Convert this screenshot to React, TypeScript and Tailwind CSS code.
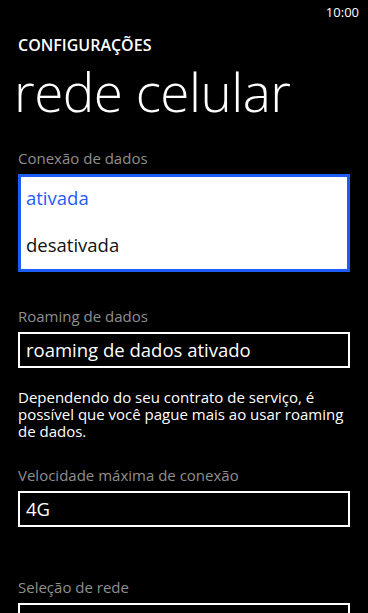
const FONT = { fontFamily: '"Open Sans", "Noto Sans", sans-serif' };

function Label({ children }: { children: string }) {
  return <p className="text-[15px] leading-5 text-[#8f8f8f]">{children}</p>;
}

function ValueBox({ value }: { value?: string }) {
  return (
    <div className="mt-[6px] flex h-9 items-center border-2 border-white px-[6px] text-[18.5px] text-white">
      {value}
    </div>
  );
}

export default function App() {
  return (
    <div className="h-[613px] w-[368px] overflow-hidden bg-black text-white" style={FONT}>
      <div className="flex h-6 items-start justify-end pr-[9px] pt-[3px] text-[13px]">10:00</div>

      <div className="px-[18px]">
        <h2 className="mt-[13px] text-[16px] font-semibold leading-4">CONFIGURAÇÕES</h2>
        <h1 className="-ml-1 mt-[3px] text-[53px] font-light leading-[72px] tracking-[-0.5px]">rede celular</h1>

        <section className="mt-[20px]">
          <Label>Conexão de dados</Label>
          <div className="mt-[6px] flex h-[98px] flex-col gap-[23px] border-[3px] border-[#1e5cf7] bg-white px-[5px] pt-[9px] text-[18.5px] leading-6">
            <span className="text-[#1e5cf7]">ativada</span>
            <span className="text-[#111]">desativada</span>
          </div>
        </section>

        <section className="mt-[34px]">
          <Label>Roaming de dados</Label>
          <ValueBox value="roaming de dados ativado" />
          <p className="mt-[21px] text-[15px] leading-[17px] text-white">
            Dependendo do seu contrato de serviço, é possível que você pague mais ao usar roaming de dados.
          </p>
        </section>

        <section className="mt-[25px]">
          <Label>Velocidade máxima de conexão</Label>
          <ValueBox value="4G" />
        </section>

        <section className="mt-[50px]">
          <Label>Seleção de rede</Label>
          <ValueBox />
        </section>
      </div>
    </div>
  );
}
